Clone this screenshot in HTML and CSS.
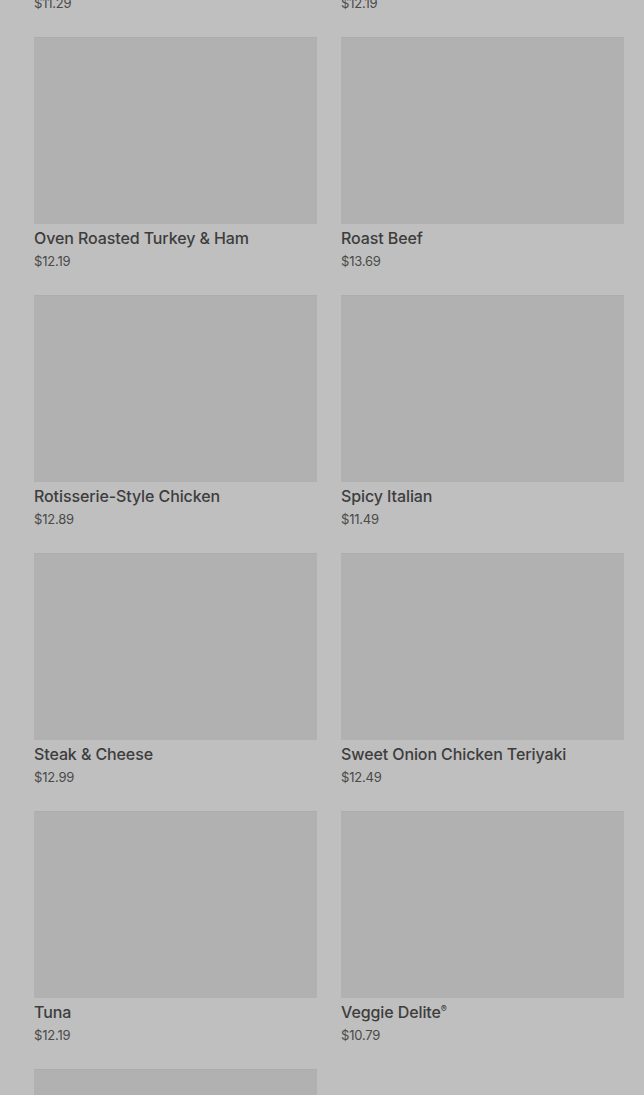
FILE: index.html
```html
<!DOCTYPE html>
<html lang="en">
<head>
	<meta charset="UTF-8">
	<title>Menu</title>
	<link rel="stylesheet" href="styles.css">
</head>
<body>
	<div class="menu">
		<div class="item">
			<div class="pic"></div>
			<div class="name">Black Forest Ham</div>
			<div class="price">$11.29</div>
		</div>
		<div class="item">
			<div class="pic"></div>
			<div class="name">Chicken &amp; Bacon Ranch</div>
			<div class="price">$12.19</div>
		</div>
		<div class="item">
			<div class="pic"></div>
			<div class="name">Oven Roasted Turkey &amp; Ham</div>
			<div class="price">$12.19</div>
		</div>
		<div class="item">
			<div class="pic"></div>
			<div class="name">Roast Beef</div>
			<div class="price">$13.69</div>
		</div>
		<div class="item">
			<div class="pic"></div>
			<div class="name">Rotisserie-Style Chicken</div>
			<div class="price">$12.89</div>
		</div>
		<div class="item">
			<div class="pic"></div>
			<div class="name">Spicy Italian</div>
			<div class="price">$11.49</div>
		</div>
		<div class="item">
			<div class="pic"></div>
			<div class="name">Steak &amp; Cheese</div>
			<div class="price">$12.99</div>
		</div>
		<div class="item">
			<div class="pic"></div>
			<div class="name">Sweet Onion Chicken Teriyaki</div>
			<div class="price">$12.49</div>
		</div>
		<div class="item">
			<div class="pic"></div>
			<div class="name">Tuna</div>
			<div class="price">$12.19</div>
		</div>
		<div class="item">
			<div class="pic"></div>
			<div class="name">Veggie Delite<sup>®</sup></div>
			<div class="price">$10.79</div>
		</div>
		<div class="item">
			<div class="pic"></div>
			<div class="name">Turkey</div>
			<div class="price">$11.29</div>
		</div>
	</div>
</body>
</html>
```
FILE: styles.css
```css
html,body{margin:0;padding:0;height:100%;overflow:hidden}
body{background:#bfbfbf;font-family:Inter,"Noto Sans",sans-serif;color:#3e3e3e}
/* page is scrolled down a bit */
.menu{display:grid;grid-template-columns:283px 283px;column-gap:24px;row-gap:24px;padding:0 20px 0 34px;margin-top:-221px}
.item{height:234px}
.pic{height:187px;background:#b1b1b1;border-top:1px solid #adadad;box-sizing:border-box}
.name{font-size:16px;font-weight:500;line-height:20px;margin-top:4px;color:#3d3d3d;letter-spacing:-0.1px}
.name sup{font-size:9px;vertical-align:6px;line-height:0}
.price{font-size:13px;line-height:18px;margin-top:4px;color:#4a4a4a;letter-spacing:-0.2px}
```
